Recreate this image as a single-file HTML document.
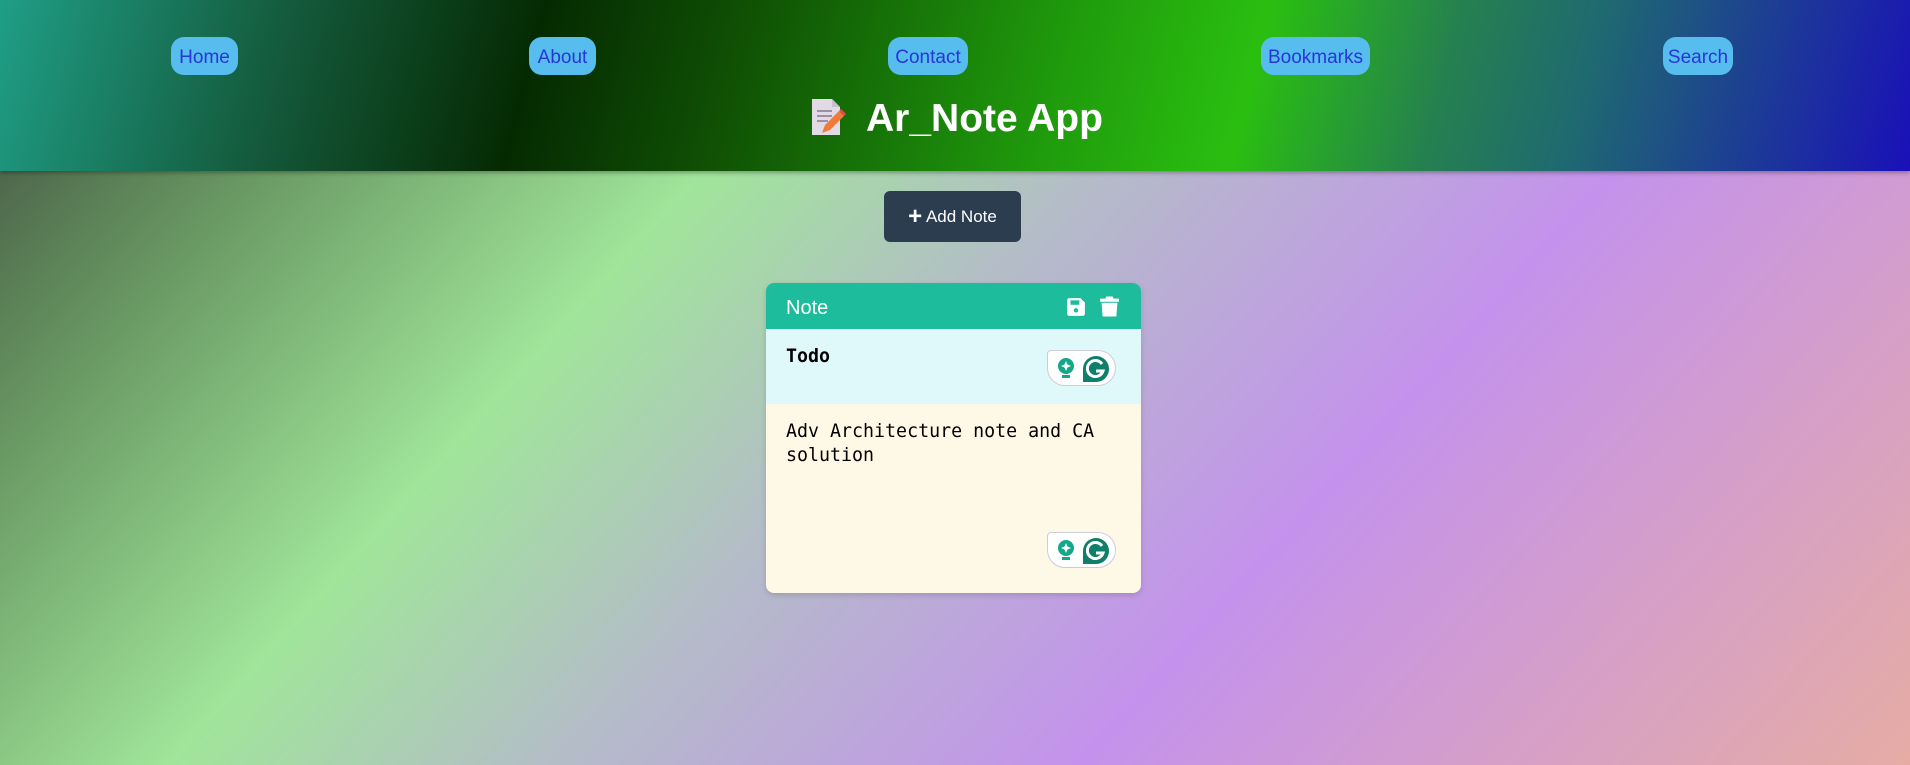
<!DOCTYPE html>
<html><head><meta charset="utf-8"><style>
*{margin:0;padding:0;box-sizing:border-box}
html,body{width:1910px;height:765px;overflow:hidden}
body{font-family:"Liberation Sans",sans-serif;position:relative;
background:linear-gradient(132deg,#3d4a3c 0%,#6a9a64 16%,#a0e59a 33%,#b4bcc8 48%,#c492ec 68%,#e6aca4 100%);}
header{position:absolute;left:0;top:0;width:1910px;height:171px;
background:linear-gradient(105deg,#1f9e86 0%,#145a3c 15%,#052a02 28%,#0f4f04 38%,#1f9a0c 55%,#2abf10 65%,#258050 75%,#1f6a70 82%,#1a10b8 100%);
box-shadow:0 2px 4px rgba(0,0,0,.3)}
.pill{position:absolute;top:37px;height:38px;background:#56bdee;border-radius:13px;color:#2636d8;font-size:19px;line-height:41px;text-align:center}
h1{position:absolute;top:95px;left:866px;color:#fff;font-size:39px;font-weight:bold;line-height:48px;white-space:nowrap}
.ic{position:absolute;left:810px;top:97px}
.btn{position:absolute;left:884px;top:191px;width:137px;height:51px;background:#2d3d50;border-radius:6px;color:#fff;font-size:17px;line-height:51px;text-align:center}
.card{position:absolute;left:766px;top:283px;width:375px;height:310px;border-radius:8px;overflow:hidden;background:#fef8e6;box-shadow:0 2px 6px rgba(0,0,0,.15)}
.ch{height:46px;background:#1cbc9c;color:#fff;font-size:20px;line-height:50px;padding-left:20px;position:relative}
.ct{height:75px;background:#dff8f9;position:relative;font-family:"DejaVu Sans Mono",monospace;font-weight:bold;font-size:18.3px;padding:17px 20px}
.cb{position:relative;font-family:"DejaVu Sans Mono",monospace;font-size:18.3px;line-height:24px;padding:16px 20px}
.g{position:absolute;width:69px;height:36px;border:1px solid #ccd;border-radius:4px 18px 18px 18px;background:#fff}
</style></head><body>
<header>
<div class="pill" style="left:171px;width:67px">Home</div>
<div class="pill" style="left:529px;width:67px">About</div>
<div class="pill" style="left:888px;width:80px">Contact</div>
<div class="pill" style="left:1261px;width:109px">Bookmarks</div>
<div class="pill" style="left:1663px;width:70px">Search</div>
<svg class="ic" width="36" height="40" viewBox="0 0 36 40"><path d="M2 2h20l8 8v28H2z" fill="#e2dbe6"/><path d="M22 2v8h8" fill="#c8bfd0"/><g stroke="#9b90a5" stroke-width="2"><line x1="7" y1="14" x2="22" y2="14"/><line x1="7" y1="19" x2="22" y2="19"/><line x1="7" y1="24" x2="18" y2="24"/></g><path d="M12 36l3-8 14-14 5 5-14 14z" fill="#f07a3c"/><path d="M29 14l5 5 2-2-5-5z" fill="#e84a4a"/></svg>
<h1>Ar_Note App</h1>
</header>
<div class="btn"><span style="font-size:24px;font-weight:bold;vertical-align:-2px">+</span> Add Note</div>
<div class="card">
<div class="ch">Note
<svg style="position:absolute;left:300px;top:14px" width="20" height="20" viewBox="0 0 18 18"><path d="M1 3a2 2 0 0 1 2-2h10l4 4v10a2 2 0 0 1-2 2H3a2 2 0 0 1-2-2z" fill="#fff"/><rect x="4" y="3" width="8" height="4" fill="#1cbc9c"/><circle cx="9" cy="12" r="2" fill="#1cbc9c"/></svg>
<svg style="position:absolute;left:334px;top:12px" width="19" height="23" viewBox="0 0 18 21"><path d="M6 1h6l1 2h5v3H0V3h5z" fill="#fff"/><path d="M1.5 7h15l-1 13h-13z" fill="#fff"/></svg>
</div>
<div class="ct">Todo
<div class="g" style="left:281px;top:21px"><svg width="69" height="36" viewBox="0 0 69 36"><circle cx="18" cy="15" r="8" fill="#13a88a"/><rect x="14" y="24" width="8" height="3" fill="#13a88a"/><path d="M18 10l1.5 3.5 3.5 1.5-3.5 1.5-1.5 3.5-1.5-3.5-3.5-1.5 3.5-1.5z" fill="#fff"/><path d="M35 18a13 13 0 1 1 13 13H35z" fill="#0e7f6a"/><path d="M54 13a8 8 0 1 0 1 7h-7" stroke="#fff" stroke-width="3" fill="none"/></svg></div>
</div>
<div class="cb">Adv Architecture note and CA<br>solution
<div class="g" style="left:281px;top:128px"><svg width="69" height="36" viewBox="0 0 69 36"><circle cx="18" cy="15" r="8" fill="#13a88a"/><rect x="14" y="24" width="8" height="3" fill="#13a88a"/><path d="M18 10l1.5 3.5 3.5 1.5-3.5 1.5-1.5 3.5-1.5-3.5-3.5-1.5 3.5-1.5z" fill="#fff"/><path d="M35 18a13 13 0 1 1 13 13H35z" fill="#0e7f6a"/><path d="M54 13a8 8 0 1 0 1 7h-7" stroke="#fff" stroke-width="3" fill="none"/></svg></div>
</div>
</div>
</body></html>
